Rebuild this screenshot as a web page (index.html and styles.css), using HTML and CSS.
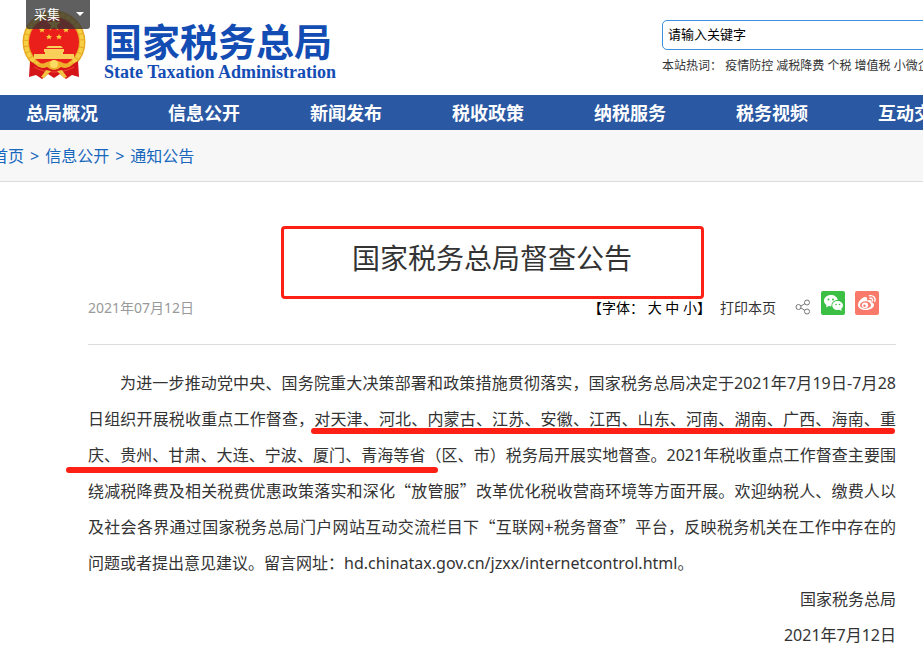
FILE: index.html
```
<!DOCTYPE html>
<html lang="zh-CN">
<head>
    <meta charset="UTF-8">
    <meta name="viewport" content="width=device-width, initial-scale=1.0">
    <title>国家税务总局督查公告</title>
    <link rel="stylesheet" href="styles.css">
</head>
<body>

<button class="collect" type="button">采集<span class="arrow"></span></button>

<header class="header">
    <a class="logo" href="#">
        <svg class="emblem" viewBox="0 0 64 70" aria-hidden="true">
            <circle cx="32" cy="32" r="31.500" fill="#e6a823"/>
            <circle cx="32" cy="32" r="28" fill="none" stroke="#f6cf45" stroke-width="4" stroke-dasharray="5 1"/>
            <circle cx="32" cy="32" r="25" fill="#ea1f1c"/>
            <path d="M32 7 L33.700 12 L39 12 L34.800 15.200 L36.400 20.500 L32 17.300 L27.600 20.500 L29.200 15.200 L25 12 L30.300 12 Z" fill="#f8cf3c"/>
            <g fill="#f8cf3c">
                <path id="star" d="M20 17 l.9 2 h2.100 l-1.600 1.400 l.6 2.100 l-2 -1.200 l-2 1.200 l.6 -2.100 l-1.600 -1.400 h2.100 Z"/>
                <use href="#star" x="24"/>
                <use href="#star" x="7" y="7"/>
                <use href="#star" x="17" y="7"/>
            </g>
            <path d="M24 38 l2 -2 h13 l2 2 Z M22 39 h20 v3 h-20 Z M23 42 h18 v2 h-18 Z M12 44 h40 v5 h-40 Z" fill="#f9cf5a"/>
            <path d="M8 51 Q17 57 24 57 L40 57 Q47 57 56 51 L57 67 L50 65 L44 69 L38 64 L32 68 L26 64 L20 69 L14 65 L7 67 Z" fill="#d41419"/>
            <path d="M12 53 q9 2 13 -1 q7 -3 14 0 q4 3 13 1 q-6 7 -13 4 q-7 6 -14 0 q-7 3 -13 -4 Z" fill="#efb02c"/>
            <circle cx="32" cy="54" r="4" fill="#fbdc62"/>
            <path d="M12 57 q8 5 20 5 q12 0 20 -5" fill="none" stroke="#f04a30" stroke-width="1"/>
            <path d="M24 60 l5 1 l-7 7 l-3 -1 Z M40 60 l-5 1 l7 7 l3 -1 Z" fill="#f3c240"/>
        </svg>
        <span class="logo-text">
            <span class="logo-cn">国家税务总局</span>
            <span class="logo-en">State Taxation Administration</span>
        </span>
    </a>
    <div class="search">
        <input type="text" value="请输入关键字" aria-label="请输入关键字">
        <div class="hot">本站热词： <a href="#">疫情防控</a> <a href="#">减税降费</a> <a href="#">个税</a> <a href="#">增值税</a> <a href="#">小微企业</a></div>
    </div>
</header>

<nav class="nav">
    <a href="#">总局概况</a>
    <a href="#">信息公开</a>
    <a href="#">新闻发布</a>
    <a href="#">税收政策</a>
    <a href="#">纳税服务</a>
    <a href="#">税务视频</a>
    <a href="#">互动交流</a>
</nav>

<div class="crumbs">
    <a href="#">首页</a><span>&gt;</span><a href="#">信息公开</a><span>&gt;</span><a href="#">通知公告</a>
</div>

<main class="article">
    <h1>国家税务总局督查公告</h1>

    <div class="meta">
        <span class="date">2021年07月12日</span>
        <div class="tools">
            <span class="font-size">【字体： <a href="#">大</a> <a href="#">中</a> <a href="#">小</a>】</span>
            <a class="print" href="#">打印本页</a>
            <svg class="share" viewBox="0 0 16 16" fill="none" stroke="#777">
                <circle cx="3.500" cy="8" r="2.500"/>
                <circle cx="12" cy="3.500" r="2.500"/>
                <circle cx="12" cy="12.500" r="2.500"/>
                <path d="M6 7 L10 4.500 M6 9 L10 11.500"/>
            </svg>
            <a class="social" href="#" aria-label="微信">
                <svg viewBox="0 0 24 24">
                    <rect width="24" height="24" rx="2" fill="#3bbf44"/>
                    <path d="M10 4 C6 4 3 6.500 3 9.700 C3 11.500 4 13 5.500 14 L5 16.500 L7.700 15 Q9 15.400 10.500 15.300 C10 11.500 13 9 16.800 9 C16.300 6 13.500 4 10 4 Z" fill="#fff"/>
                    <path d="M16.500 10 C13.500 10 11.300 12 11.300 14.500 C11.300 17 13.500 19 16.500 19 Q17.500 19 18.500 18.700 L20.700 20 L20.200 17.800 C21.300 17 22 15.900 22 14.500 C22 12 19.500 10 16.500 10 Z" fill="#fff"/>
                    <g fill="#3bbf44"><circle cx="7.500" cy="8.500" r="1"/><circle cx="12" cy="8.500" r="1"/><circle cx="15" cy="13.500" r=".8"/><circle cx="18.500" cy="13.500" r=".8"/></g>
                </svg>
            </a>
            <a class="social" href="#" aria-label="微博">
                <svg viewBox="0 0 24 24">
                    <rect width="24" height="24" rx="2" fill="#f97a6b"/>
                    <path d="M10 6 C7 6.500 3 10.500 3 14 C3 17 6.500 19 11 19 C15.500 19 19 16.500 19 14 C19 12.500 18 11.800 16.500 11.300 C17 9 15.500 8.300 12 9.600 C12.600 7.300 12 5.800 10 6 Z" fill="#fff"/>
                    <ellipse cx="10.500" cy="14" rx="5.500" ry="3.700" fill="#f97a6b"/>
                    <ellipse cx="10" cy="14.200" rx="3.200" ry="2.800" fill="#fff"/>
                    <circle cx="9.500" cy="14.700" r="1.200" fill="#f97a6b"/>
                    <path d="M14.500 4.700 C18.500 4 21 7 19.800 10.500 M15 7.300 C17 7 18 8.200 17.500 10" fill="none" stroke="#fff" stroke-width="1.400" stroke-linecap="round"/>
                </svg>
            </a>
        </div>
    </div>

    <div class="content">
        <p>为进一步推动党中央、国务院重大决策部署和政策措施贯彻落实，国家税务总局决定于2021年7月19日-7月28日组织开展税收重点工作督查，对天津、河北、内蒙古、江苏、安徽、江西、山东、河南、湖南、广西、海南、重庆、贵州、甘肃、大连、宁波、厦门、青海等省（区、市）税务局开展实地督查。2021年税收重点工作督查主要围绕减税降费及相关税费优惠政策落实和深化<span class="quote">“放管服”</span>改革优化税收营商环境等方面开展。欢迎纳税人、缴费人以及社会各界通过国家税务总局门户网站互动交流栏目下<span class="quote">“互联网+税务督查”</span>平台，反映税务机关在工作中存在的问题或者提出意见建议。留言网址：hd.chinatax.gov.cn/jzxx/internetcontrol.html。</p>
        <p class="sign">国家税务总局</p>
        <p class="sign">2021年7月12日</p>
        <!-- 红色标注线 -->
        <i class="line line-top"></i>
        <i class="line line-bottom"></i>
    </div>
</main>

</body>
</html>
```
FILE: styles.css
```
body {
    margin: 0;
    overflow-x: hidden;
    font-family: "Noto Sans", "Noto Sans CJK SC", sans-serif;
    font-size: 16px;
    color: #333;
    background-color: #fff;
}
a {
    color: inherit;
    text-decoration: none;
}
.collect {
    position: absolute;
    top: 0;
    left: 26px;
    z-index: 2;
    display: flex;
    align-items: center;
    justify-content: space-between;
    width: 64px;
    height: 29px;
    padding: 0 6px 2px 8px;
    border: none;
    border-radius: 0 0 3px 3px;
    background-color: rgba(50, 50, 50, 0.78);
    color: #fff;
    font-family: inherit;
    font-size: 13px;
}
.arrow {
    border: 4px solid transparent;
    border-top-color: #fff;
    border-bottom: none;
}
.header {
    display: flex;
    height: 95px;
    overflow: hidden;
}
.logo {
    display: flex;
    flex: none;
    width: 640px;
    padding-left: 22px;
    color: #134db4;
}
.emblem {
    width: 64px;
    height: 70px;
    margin-top: 10px;
}
.logo-text {
    margin: 20px 0 0 18px;
}
.logo-cn {
    display: block;
    font-size: 38px;
    font-weight: bold;
    line-height: 42px;
}
.logo-en {
    display: block;
    font-family: "Liberation Serif", serif;
    font-size: 18px;
    font-weight: bold;
    line-height: 20px;
}
.search {
    flex: none;
    width: 400px;
    padding-top: 20px;
}
.search input {
    display: block;
    width: 100%;
    height: 30px;
    box-sizing: border-box;
    padding: 0 5px 4px;
    border: 1px solid #3a92dc;
    border-radius: 5px;
    font-family: inherit;
    font-size: 13px;
    color: #000;
}
.hot {
    margin-top: 6px;
    font-size: 12px;
    line-height: 20px;
    white-space: nowrap;
}
.nav {
    display: flex;
    height: 35px;
    margin-left: -9px;
    overflow: hidden;
    background-color: #2a58a3;
}
.nav a {
    flex: 0 0 142px;
    color: #fff;
    font-size: 18px;
    font-weight: bold;
    line-height: 36px;
    text-align: center;
}
.crumbs {
    margin-left: -8px;
    padding-top: 2px;
    border-bottom: 1px solid #dcdcdc;
    background-color: #f7f7f7;
    color: #1768bd;
    line-height: 49px;
}
.crumbs span {
    margin: 0 6px;
}
.article {
    margin: 0 27px 0 88px;
}
h1 {
    max-width: 417px;
    margin: 44px auto 0;
    padding-bottom: 9px;
    border: 3px solid #ff2015;
    border-radius: 4px;
    font-size: 28px;
    font-weight: normal;
    line-height: 58px;
    text-align: center;
}
.meta {
    display: flex;
    align-items: center;
    justify-content: space-between;
    height: 45px;
    padding-right: 17px;
    border-bottom: 1px solid #dcdcdc;
    font-size: 14px;
}
.date {
    margin-bottom: 30px;
    color: #999;
}
.tools {
    display: flex;
    align-items: center;
    margin-bottom: 30px;
}
.font-size {
    color: #000;
}
.print {
    margin-left: 9px;
}
.share {
    width: 16px;
    height: 16px;
    margin-left: 19px;
}
.social {
    height: 24px;
    margin: -8px 0 0 10px;
}
.social svg {
    display: block;
    width: 24px;
    height: 24px;
}
.content {
    position: relative;
    margin-top: 20px;
    line-height: 36px;
}
.content p {
    margin: 0;
    text-align: justify;
    text-indent: 2em;
}
.content .sign {
    text-align: right;
    text-indent: 0;
}
.quote {
    font-family: "Noto Sans CJK SC", sans-serif;
    line-height: 1;
}
.line {
    position: absolute;
    height: 6px;
    border-radius: 3px;
    background-color: #ff2015;
}
.line-top {
    top: 63px;
    left: 223px;
    right: 1px;
}
.line-bottom {
    top: 102px;
    left: -22px;
    width: 372px;
}
```
